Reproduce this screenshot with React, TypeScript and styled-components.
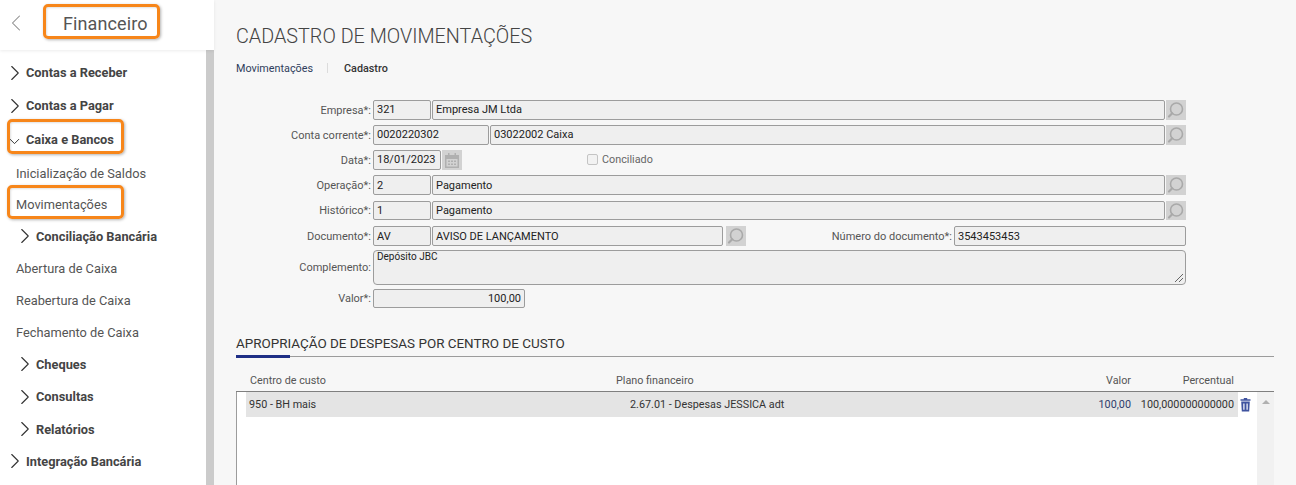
import styled, { createGlobalStyle } from 'styled-components';
import { ChevronDown, ChevronLeft, ChevronRight } from 'lucide-react';

const GlobalStyle = createGlobalStyle`
  html, body {
    margin: 0;
    height: 485px;
    overflow: hidden;
    background: #f7f7f7;
    font-family: Roboto, "Liberation Sans", sans-serif;
  }
  * { box-sizing: border-box; }
`;

const Shell = styled.div`
  position: relative;
  display: flex;
  width: 1296px;
  height: 485px;
  overflow: hidden;
`;

const Sidebar = styled.aside`
  flex: 0 0 214px;
  display: flex;
  flex-direction: column;
  background: #fff;
`;

const SideHeader = styled.header`
  flex: 0 0 50px;
  display: flex;
  align-items: center;
  padding-left: 2px;
  gap: 33px;
  color: #888;
  box-shadow: 0 1px 3px rgba(0, 0, 0, 0.08);
  z-index: 1;
`;

const BackIcon = styled(ChevronLeft)`
  margin-bottom: 4px;
`;

const SideTitle = styled.h1`
  margin: 0 0 3px;
  font-size: 18px;
  font-weight: 400;
  color: #555;
  letter-spacing: 0.1px;
`;

const SideBody = styled.div`
  flex: 1;
  display: flex;
  border-right: 8px solid #cbcbcb;
  padding-top: 6px;
`;

const Menu = styled.nav`
  flex: 1;
  display: flex;
  flex-direction: column;
`;

const Group = styled.div<{ $nested?: boolean; $h?: number }>`
  height: ${({ $h }) => $h ?? 33}px;
  display: flex;
  align-items: center;
  padding-left: ${({ $nested }) => ($nested ? 17 : 7)}px;
  font-size: 12.8px;
  font-weight: 700;
  color: #444;
  white-space: nowrap;
  svg {
    flex: 0 0 26px;
    margin: 0 -1.5px 0 -5.5px;
    color: #333;
  }
`;

const OpenIcon = styled(ChevronDown)`
  && {
    flex: 0 0 17px;
    margin: 5px 3.5px 0 -1.5px;
  }
`;

const Leaf = styled.div<{ $h?: number }>`
  height: ${({ $h }) => $h ?? 32}px;
  display: flex;
  align-items: center;
  padding-left: 16px;
  font-size: 12.8px;
  color: #555;
  white-space: nowrap;
`;

const Main = styled.main`
  flex: 1;
  padding: 24px 22px 0 22px;
  min-width: 0;
`;

const PageTitle = styled.h2`
  margin: 0;
  font-size: 19.8px;
  line-height: 25px;
  font-weight: 300;
  color: #444;
`;

const Crumbs = styled.div`
  display: flex;
  align-items: center;
  margin-top: 12px;
  height: 14px;
  font-size: 10.8px;
  color: #2f3d5c;
`;

const CrumbSep = styled.span`
  width: 1px;
  height: 10px;
  margin: 0 16px 0 14px;
  background: #dcdcdc;
`;

const CrumbCurrent = styled.span`
  color: #333;
  font-weight: 500;
`;

const Form = styled.form`
  display: flex;
  flex-direction: column;
  margin-top: 25px;
  width: 950px;
`;

const Row = styled.div<{ $h?: number; $after?: number }>`
  display: flex;
  align-items: stretch;
  height: ${({ $h }) => $h ?? 20}px;
  margin-bottom: ${({ $after }) => $after ?? 5}px;
  gap: 1px;
`;

const Label = styled.label<{ $w?: number }>`
  flex: 0 0 ${({ $w }) => $w ?? 135}px;
  margin-right: 1px;
  display: flex;
  align-items: center;
  justify-content: flex-end;
  font-size: 11px;
  color: #555;
  white-space: nowrap;
`;

const Field = styled.div<{ $w?: number; $right?: boolean; $lift?: boolean }>`
  ${({ $w }) => ($w ? `flex: 0 0 ${$w}px;` : 'flex: 1; min-width: 0;')}
  display: flex;
  align-items: center;
  justify-content: ${({ $right }) => ($right ? 'flex-end' : 'flex-start')};
  padding: 0 3px ${({ $lift }) => ($lift ? 2 : 0)}px;
  background: #efefef;
  border: 1px solid #9c9c9c;
  border-radius: 2px;
  font-size: 11px;
  color: #222;
  white-space: nowrap;
  overflow: hidden;
`;

const TextArea = styled.div`
  position: relative;
  flex: 1;
  padding: 0 3px;
  background: #efefef;
  border: 1px solid #9c9c9c;
  border-radius: 4px;
  font-size: 10px;
  line-height: 12px;
  color: #222;
`;

const Grip = styled.svg`
  position: absolute;
  right: 1px;
  bottom: 1px;
`;

const IconButton = styled.button`
  flex: 0 0 20px;
  display: flex;
  align-items: center;
  justify-content: center;
  padding: 0;
  border: 0;
  background: #d2d2d2;
`;

const DocSearch = styled(IconButton)`
  margin-left: 2px;
`;

const CheckArea = styled.div`
  display: flex;
  align-items: center;
  gap: 4px;
  margin: 0 0 2px 124px;
  font-size: 10.8px;
  color: #666;
`;

const Check = styled.span`
  width: 11px;
  height: 11px;
  border: 1px solid #c4c4c4;
  border-radius: 2px;
  background: #f2f2f2;
`;

const SectionTitle = styled.h3`
  position: relative;
  margin: 28px 0 0;
  width: 1038px;
  height: 21px;
  font-size: 13.45px;
  line-height: 16px;
  font-weight: 400;
  color: #333;
  border-bottom: 1px solid #9c9c9c;
  &::after {
    content: '';
    position: absolute;
    left: 0;
    bottom: -2px;
    width: 54px;
    height: 3px;
    background: #1f2f86;
  }
`;

const Table = styled.section`
  width: 1038px;
  margin-top: 14px;
  font-size: 10.8px;
`;

const HeadRow = styled.div`
  display: grid;
  grid-template-columns: 366px 406px 109px 103px;
  height: 21px;
  padding: 0 0 1px 14px;
  align-items: center;
  color: #555;
  border-bottom: 1px solid #7f7f7f;
`;

const Cell = styled.span<{ $right?: boolean; $tone?: string }>`
  text-align: ${({ $right }) => ($right ? 'right' : 'left')};
  color: ${({ $tone }) => $tone ?? 'inherit'};
  white-space: nowrap;
`;

const TableBody = styled.div`
  display: flex;
  height: 100px;
  background: #fff;
  border-left: 1px solid #9c9c9c;
`;

const RowArea = styled.div`
  flex: 1;
  display: flex;
  align-items: flex-start;
  height: 100%;
  padding-left: 9px;
`;

const DataRow = styled.div`
  flex: 0 0 992px;
  height: 25px;
  display: grid;
  grid-template-columns: 381px 410px 91px 103px;
  align-items: center;
  padding: 0 4px 0 3px;
  background: #e4e4e4;
  color: #333;
`;

const RowAction = styled.button`
  flex: 0 0 19px;
  height: 25px;
  display: flex;
  align-items: center;
  justify-content: center;
  padding: 0 4px 0 0;
  border: 0;
  background: #fff;
`;

const ScrollTrack = styled.div`
  flex: 0 0 17px;
  display: flex;
  justify-content: center;
  padding-top: 8px;
  background: #f1f1f1;
`;

const ScrollUp = styled.span`
  width: 0;
  height: 0;
  border-left: 4px solid transparent;
  border-right: 4px solid transparent;
  border-bottom: 4px solid #b0b0b0;
`;

const Mark = styled.div<{ $x: number; $y: number; $w: number; $h: number }>`
  position: absolute;
  left: ${({ $x }) => $x}px;
  top: ${({ $y }) => $y}px;
  width: ${({ $w }) => $w}px;
  height: ${({ $h }) => $h}px;
  border: 3px solid #f7861a;
  border-radius: 5px;
  box-shadow: 1px 1px 3px rgba(0, 0, 0, 0.3), inset 1px 1px 2px rgba(0, 0, 0, 0.12);
  pointer-events: none;
`;

function SearchIcon() {
  return (
    <svg width="20" height="20" viewBox="0 0 20 20" fill="none" stroke="#a9a9a9">
      <circle cx="10.5" cy="9" r="6" strokeWidth="1.6" />
      <path d="M6.2 13.3 3 16.5" strokeWidth="2.2" strokeLinecap="round" />
    </svg>
  );
}

function CalendarIcon() {
  return (
    <svg width="16" height="17" viewBox="0 0 16 17" fill="#b0b0b0">
      <path d="M1 3h14v13H1z M2.5 7v7.5h11V7z" fillRule="evenodd" />
      <path d="M4 1h1.5v3H4zM10.5 1H12v3h-1.5z" />
      <path d="M4 8.4h2V10H4zM7 8.4h2V10H7zM10 8.4h2V10h-2zM4 11.4h2V13H4zM7 11.4h2V13H7zM10 11.4h2V13h-2z" />
    </svg>
  );
}

function TrashIcon() {
  return (
    <svg width="11" height="14" viewBox="0 0 11 14">
      <path fill="#3f539f" d="M3.8 0h3.4v1.2h3.3v1.6H.5V1.2h3.3z" />
      <path fill="#3f539f" fillRule="evenodd" d="M1.2 3.6h8.6l-.6 10H1.8z M3.3 5.4v6.4h1.2V5.4z M6.5 5.4v6.4h1.2V5.4z" />
    </svg>
  );
}

function Financeiro() {
  return (
    <Sidebar>
      <SideHeader>
        <BackIcon size={28} strokeWidth={0.9} />
        <SideTitle>Financeiro</SideTitle>
      </SideHeader>
      <SideBody>
        <Menu>
          <Group><ChevronRight size={26} strokeWidth={1} />Contas a Receber</Group>
          <Group><ChevronRight size={26} strokeWidth={1} />Contas a Pagar</Group>
          <Group $h={34}><OpenIcon size={17} strokeWidth={1.4} />Caixa e Bancos</Group>
          <Leaf $h={34}>Inicialização de Saldos</Leaf>
          <Leaf $h={29}>Movimentações</Leaf>
          <Group $nested $h={34}><ChevronRight size={26} strokeWidth={1} />Conciliação Bancária</Group>
          <Leaf $h={31}>Abertura de Caixa</Leaf>
          <Leaf>Reabertura de Caixa</Leaf>
          <Leaf>Fechamento de Caixa</Leaf>
          <Group $nested $h={32}><ChevronRight size={26} strokeWidth={1} />Cheques</Group>
          <Group $nested><ChevronRight size={26} strokeWidth={1} />Consultas</Group>
          <Group $nested $h={32}><ChevronRight size={26} strokeWidth={1} />Relatórios</Group>
          <Group $h={32}><ChevronRight size={26} strokeWidth={1} />Integração Bancária</Group>
        </Menu>
      </SideBody>
    </Sidebar>
  );
}

export default function App() {
  return (
    <Shell>
      <GlobalStyle />
      <Financeiro />
      <Main>
        <PageTitle>CADASTRO DE MOVIMENTAÇÕES</PageTitle>
        <Crumbs>
          Movimentações
          <CrumbSep />
          <CrumbCurrent>Cadastro</CrumbCurrent>
        </Crumbs>
        <Form>
          <Row>
            <Label>Empresa*:</Label>
            <Field $w={58} $lift>321</Field>
            <Field $lift>Empresa JM Ltda</Field>
            <IconButton type="button"><SearchIcon /></IconButton>
          </Row>
          <Row>
            <Label>Conta corrente*:</Label>
            <Field $w={116} $lift>0020220302</Field>
            <Field $lift>03022002 Caixa</Field>
            <IconButton type="button"><SearchIcon /></IconButton>
          </Row>
          <Row>
            <Label>Data*:</Label>
            <Field $w={68} $lift>18/01/2023</Field>
            <IconButton type="button"><CalendarIcon /></IconButton>
            <CheckArea><Check />Conciliado</CheckArea>
          </Row>
          <Row $after={6}>
            <Label>Operação*:</Label>
            <Field $w={58}>2</Field>
            <Field>Pagamento</Field>
            <IconButton type="button"><SearchIcon /></IconButton>
          </Row>
          <Row $h={19} $after={6}>
            <Label>Histórico*:</Label>
            <Field $w={58}>1</Field>
            <Field>Pagamento</Field>
            <IconButton type="button"><SearchIcon /></IconButton>
          </Row>
          <Row $h={20} $after={4}>
            <Label>Documento*:</Label>
            <Field $w={58}>AV</Field>
            <Field $w={291}>AVISO DE LANÇAMENTO</Field>
            <DocSearch type="button"><SearchIcon /></DocSearch>
            <Label $w={205}>Número do documento*:</Label>
            <Field>3543453453</Field>
          </Row>
          <Row $h={35} $after={4}>
            <Label>Complemento:</Label>
            <TextArea>
              Depósito JBC
              <Grip width="10" height="10" viewBox="0 0 10 10" stroke="#555" strokeWidth="0.9">
                <path d="M1 9 9 1M5 9l4-4" />
              </Grip>
            </TextArea>
          </Row>
          <Row $h={19} $after={0}>
            <Label>Valor*:</Label>
            <Field $w={152} $right>100,00</Field>
          </Row>
        </Form>
        <SectionTitle>APROPRIAÇÃO DE DESPESAS POR CENTRO DE CUSTO</SectionTitle>
        <Table>
          <HeadRow>
            <Cell>Centro de custo</Cell>
            <Cell>Plano financeiro</Cell>
            <Cell $right>Valor</Cell>
            <Cell $right>Percentual</Cell>
          </HeadRow>
          <TableBody>
            <RowArea>
              <DataRow>
                <Cell>950 - BH mais</Cell>
                <Cell>2.67.01 - Despesas JESSICA adt</Cell>
                <Cell $right $tone="#2f3d6c">100,00</Cell>
                <Cell $right>100,000000000000</Cell>
              </DataRow>
              <RowAction type="button"><TrashIcon /></RowAction>
            </RowArea>
            <ScrollTrack><ScrollUp /></ScrollTrack>
          </TableBody>
        </Table>
      </Main>
      <Mark $x={43} $y={4} $w={117} $h={35} />
      <Mark $x={7} $y={119} $w={117} $h={35} />
      <Mark $x={7} $y={185} $w={117} $h={34} />
    </Shell>
  );
}
